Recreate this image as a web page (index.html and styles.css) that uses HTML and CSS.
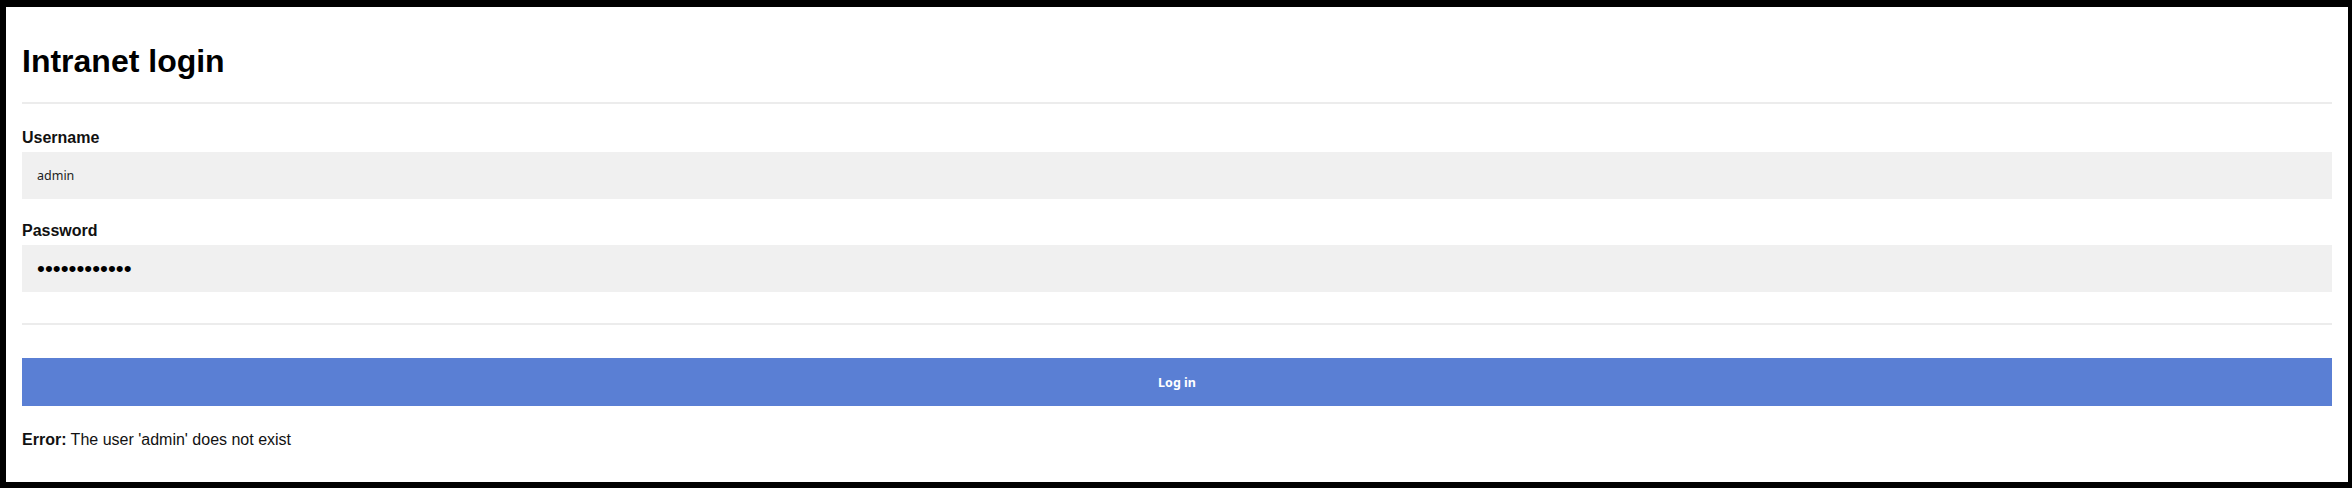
FILE: index.html
```html
<!DOCTYPE html>
<html lang="en">
<head>
  <meta charset="UTF-8" />
  <title>Intranet login</title>
  <link rel="stylesheet" href="styles.css">
</head>
<body>
  <div class="marco">
    <h1>Intranet login</h1>
    <hr class="sep sep-top">

    <form class="login" action="#" method="post">
      <div class="campo">
        <label for="username">Username</label>
        <input type="text" id="username" name="username" value="admin" autocomplete="off">
      </div>
      <div class="campo">
        <label for="password">Password</label>
        <input type="password" id="password" name="password" value="password1234" autocomplete="off" class="pass">
      </div>

      <hr class="sep sep-bottom">

      <button type="submit">Log in</button>
    </form>

    <p class="error"><strong>Error:</strong> The user 'admin' does not exist</p>
  </div>
</body>
</html>
```

FILE: styles.css
```css
html, body {
  margin: 0;
  background-color: #000;
}
body {
  padding: 7px 4px 6px 6px;
  height: 488px;
  box-sizing: border-box;
  font-family: "Liberation Sans", Arial, sans-serif;
  color: #111;
}
.marco {
  background-color: #fff;
  height: 100%;
  box-sizing: border-box;
  padding: 36px 16px 0;
}
h1 {
  margin: 0;
  font-size: 32px;
  line-height: 37px;
  font-weight: bold;
  color: #000;
}

/* Separadores */
.sep {
  border: none;
  height: 2px;
  background-color: #ececec;
  margin: 0;
}
.sep-top {
  margin: 22px 0 25px;
}
.sep-bottom {
  margin: 31px 0 33px;
}

/* Campos del formulario */
.campo + .campo {
  margin-top: 23px;
}
.campo label {
  display: block;
  font-size: 16px;
  line-height: 18px;
  font-weight: bold;
  margin-bottom: 5px;
}
.campo input {
  display: block;
  width: 100%;
  height: 47px;
  box-sizing: border-box;
  border: none;
  outline: none;
  padding: 0 15px;
  background-color: #f0f0f0;
  color: #222;
  font-family: "Noto Sans", sans-serif;
  font-size: 12.5px;
}
.campo input.pass {
  font-family: "Liberation Sans", sans-serif;
  font-size: 22.5px;
  color: #000;
}

button {
  display: block;
  width: 100%;
  height: 48px;
  border: none;
  background-color: #5a7fd4;
  color: #fff;
  font-family: "Noto Sans", sans-serif;
  font-size: 12.5px;
  font-weight: bold;
  cursor: pointer;
}

.error {
  margin: 25px 0 0;
  font-size: 16px;
  line-height: 18px;
  color: #111;
}
```
